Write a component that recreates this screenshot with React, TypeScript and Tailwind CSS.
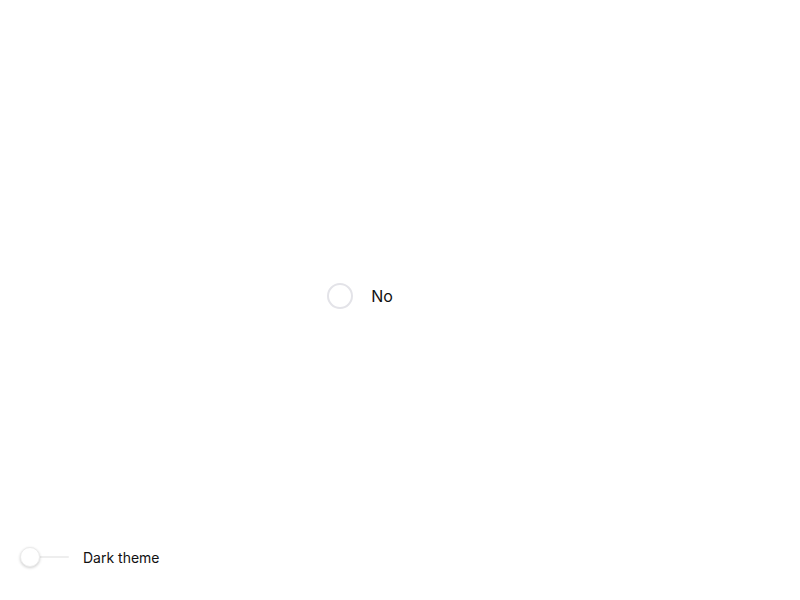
export default function App() {
  return (
    <div className="relative h-[600px] w-[800px] bg-white text-[#111] font-['Inter','Liberation_Sans',sans-serif]">
      <div className="flex h-full items-center justify-center pr-[80px] pb-[8px]">
        <label className="flex items-center gap-[18px]">
          <span className="block size-[26px] rounded-full border-2 border-[#e3e3e8] bg-white" />
          <span className="text-[16px] leading-none">No</span>
        </label>
      </div>
      <div className="absolute left-[20px] top-[547px] flex items-center gap-[14px]">
        <div className="relative h-[22px] w-[49px]">
          <div className="absolute left-0 right-0 top-[9px] h-[2px] rounded bg-[#eeeeee]" />
          <div className="absolute left-0 top-0 size-[20px] rounded-full border border-[#ececec] bg-white shadow-[0_1px_3px_rgba(0,0,0,0.2)]" />
        </div>
        <span className="text-[14px] leading-none">Dark theme</span>
      </div>
    </div>
  );
}
